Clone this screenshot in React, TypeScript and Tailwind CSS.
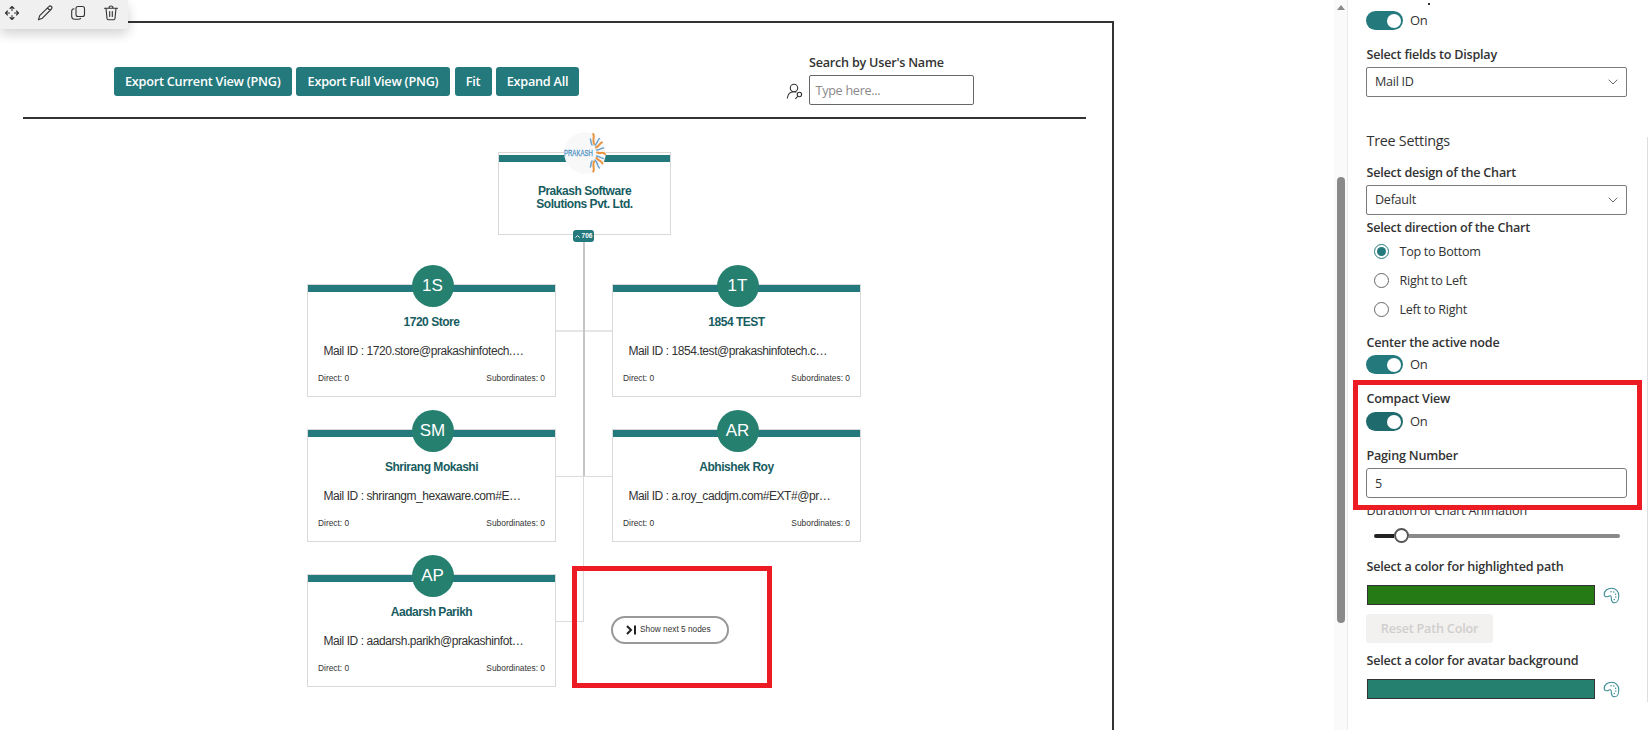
import { clsx } from 'clsx'

type Person = {
  initials: string
  name: string
  mail: string
  place: string
}

const PEOPLE: Person[] = [
  { initials: '1S', name: '1720 Store', mail: '1720.store@prakashinfotech.…', place: 'left-[307px] top-[284px]' },
  { initials: '1T', name: '1854 TEST', mail: '1854.test@prakashinfotech.c…', place: 'left-[612px] top-[284px]' },
  { initials: 'SM', name: 'Shrirang Mokashi', mail: 'shrirangm_hexaware.com#E…', place: 'left-[307px] top-[429px]' },
  { initials: 'AR', name: 'Abhishek Roy', mail: 'a.roy_caddjm.com#EXT#@pr…', place: 'left-[612px] top-[429px]' },
  { initials: 'AP', name: 'Aadarsh Parikh', mail: 'aadarsh.parikh@prakashinfot…', place: 'left-[307px] top-[574px]' },
]

const EXPORT_BUTTONS = [
  { label: 'Export Current View (PNG)', width: 'w-[177.500px]' },
  { label: 'Export Full View (PNG)', width: 'w-[154px]' },
  { label: 'Fit', width: 'w-[37px]' },
  { label: 'Expand All', width: 'w-[83px]' },
]

const DIRECTIONS = ['Top to Bottom', 'Right to Left', 'Left to Right']

function MoveIcon() {
  return (
    <svg width="16" height="16" viewBox="0 0 16 16" fill="none" stroke="#333" strokeWidth="1.1" strokeLinecap="round" strokeLinejoin="round">
      <path d="M8 1.5v4M8 10.5v4M1.5 8h4M10.5 8h4M6 3.5l2-2 2 2M6 12.5l2 2 2-2M3.5 6l-2 2 2 2M12.5 6l2 2-2 2" />
    </svg>
  )
}

function PencilIcon() {
  return (
    <svg width="16" height="16" viewBox="0 0 16 16" fill="none" stroke="#333" strokeWidth="1.1" strokeLinejoin="round">
      <path d="M11.8 1.6a1.7 1.7 0 0 1 2.600 2.400L5.400 13.200l-4 1.600 1.300-4.200zM10.400 3l2.700 2.500" />
    </svg>
  )
}

function CopyIcon() {
  return (
    <svg width="16" height="16" viewBox="0 0 16 16" fill="none" stroke="#333" strokeWidth="1.1" strokeLinecap="round">
      <rect x="6" y="1.5" width="8.5" height="10" rx="2" />
      <path d="M4 3.800C2.500 4 1.700 5 1.700 6.200v5.300A3 3 0 0 0 4.700 14.300h3.800c1 0 1.800-.4 2.100-1" />
    </svg>
  )
}

function TrashIcon() {
  return (
    <svg width="16" height="16" viewBox="0 0 16 16" fill="none" stroke="#333" strokeWidth="1.1" strokeLinecap="round">
      <path d="M1.500 3.200h13M6 3a2 2 0 0 1 4 0M3 3.200l1 10.300c.1.800.6 1.200 1.300 1.200h5.400c.7 0 1.200-.4 1.300-1.200l1-10.300M6.700 6.500v5M9.300 6.500v5" />
    </svg>
  )
}

function PeopleSearchIcon() {
  return (
    <svg width="17" height="17" viewBox="0 0 17 17" fill="none" stroke="#333" strokeWidth="1.100">
      <circle cx="8" cy="5" r="3.700" />
      <path d="M1.300 15.500C1.700 11.500 4.300 8.800 8 8.800c1 0 1.700.2 2.400.5M11.800 13.300l-2.500 2.500" />
      <circle cx="13.400" cy="11.500" r="2.200" />
    </svg>
  )
}

function PaletteIcon() {
  return (
    <svg width="17" height="17" viewBox="0 0 17 17" fill="none" stroke="#3d8c96" strokeWidth="1.100">
      <path d="M8.500 1.200C4.500 1.200 1.200 4 1.200 7.200c0 1.700 1.100 2.500 2.300 2.500 1.800 0 2.600-1.300 3.900-.9 1.600.5.600 2.400 1.100 4.300.4 1.700 1.500 2.700 3 2.700 2.700 0 4.300-3.300 4.300-7.100C15.800 4.200 12.700 1.200 8.500 1.200z" />
      <g fill="#3d8c96" stroke="none">
        <circle cx="8" cy="4.700" r=".75" />
        <circle cx="10.800" cy="5" r=".75" />
        <circle cx="12.600" cy="7.300" r=".75" />
        <circle cx="12.800" cy="10" r=".75" />
        <circle cx="11.300" cy="12.500" r=".75" />
      </g>
    </svg>
  )
}

function Chevron() {
  return (
    <svg width="10" height="6" viewBox="0 0 10 6" fill="none" stroke="#666" strokeWidth="1">
      <path d="M.7.700 5 5 9.300.700" />
    </svg>
  )
}

function Logo() {
  return (
    <svg width="42" height="42" viewBox="0 0 42 42">
      <circle cx="21" cy="21" r="20.800" fill="#f8f8f8" />
      <text transform="translate(0 24) scale(.72 1)" fontSize="8.300" textLength="40" lengthAdjust="spacing" fill="#4f93c6" stroke="#4f93c6" strokeWidth=".3" fontFamily="Liberation Sans">
        PRAKASH
      </text>
      <g fill="none" strokeLinecap="round" strokeWidth="2">
        <path stroke="#ea9440" d="M29.300 2c1.500 3-1 5 .7 10M38 10.500c-2 0-2.500 3.500-6 5M41 22c-2.500-2.500-4 0-8-1.500M38.500 31.500c-1-3-3-2-6-5.500M29.300 39.500c1.500-3-1-6 .7-10" />
        <path stroke="#6ba3cf" strokeWidth="1.500" d="M26.300 7c1 1 0 3 1.700 6M35.500 6.500c-2.500 2-1.500 4-4.500 7M39.500 16c-2 0-4 2-7 2M39.500 26.500c-2 0-4-2-7-2.500M35.500 36c-2.500-2-1.500-5-4.500-8M26.300 35c1-1 0-3 1.700-6" />
      </g>
    </svg>
  )
}

function Toggle({ dark }: { dark?: boolean }) {
  return (
    <div className="flex h-[19px] items-center gap-[7px] text-[#333]">
      <div className={clsx('flex h-[19px] w-[37px] items-center justify-end rounded-full pr-[2px]', dark ? 'bg-[#1f6a6c]' : 'bg-[#24797c]')}>
        <div className="size-[14px] rounded-full bg-white" />
      </div>
      <span className="text-[13px]">On</span>
    </div>
  )
}

function Label({ children, light }: { children: string; light?: boolean }) {
  return (
    <div className={clsx('h-[20px] pl-[0.500px] leading-[20px] tracking-[-0.22px] whitespace-nowrap text-[#333]', light ? 'font-normal' : 'font-semibold')}>
      {children}
    </div>
  )
}

function Select({ value }: { value: string }) {
  return (
    <div className="flex h-[30px] w-[261px] items-center justify-between rounded-[2px] border border-[#7a7a7a] pr-[8px] pl-[8px] text-[#333]">
      <span className="pt-px">{value}</span>
      <Chevron />
    </div>
  )
}

function ColorRow({ color }: { color: string }) {
  return (
    <div className="flex h-[20px] items-center gap-[8px] pl-px">
      <div className={clsx('h-[20px] w-[228px] border border-[#333]', color)} />
      <PaletteIcon />
    </div>
  )
}

function NodeCard({ person }: { person: Person }) {
  return (
    <div className={clsx('absolute h-[113px] w-[249px] border border-[#d9d9d9] bg-white', person.place)}>
      <div className="h-[7px] bg-[#24797c]" />
      <div className="absolute -top-[20.500px] left-[103.500px] flex size-[42px] items-center justify-center rounded-full bg-[#268070] text-[17px] text-white">
        {person.initials}
      </div>
      <div className="mt-[22px] text-center text-[12px] leading-[16px] font-bold tracking-[-0.47px] text-[#175c5f]">{person.name}</div>
      <div className="mt-[13px] pl-[15.500px] text-[12px] leading-[16px] tracking-[-0.43px] whitespace-nowrap text-[#333]">Mail ID : {person.mail}</div>
      <div className="mt-[13px] flex justify-between px-[10px] text-[8.400px] leading-[12px] text-[#333]">
        <span>Direct: 0</span>
        <span>Subordinates: 0</span>
      </div>
    </div>
  )
}

function OrgChart() {
  return (
    <div className="font-['Liberation_Sans',sans-serif] tracking-normal">
      {/* connector lines */}
      <div className="absolute top-[330px] left-[556px] h-[2px] w-[56px] bg-[#e6e6e6]" />
      <div className="absolute top-[476px] left-[556px] h-px w-[56px] bg-[#dcdcdc]" />
      <div className="absolute top-[621px] left-[556px] h-px w-[28px] bg-[#dcdcdc]" />
      <div className="absolute top-[235px] left-[583px] h-[241px] w-[2px] bg-[#c6c6c6]" />
      <div className="absolute top-[476px] left-[583px] h-[146px] w-px bg-[#dcdcdc]" />

      {/* root node */}
      <div className="absolute top-[152px] left-[498px] h-[83px] w-[173px] border border-[#d9d9d9] bg-white">
        <div className="mt-[2px] h-[7px] bg-[#24797c]" />
        <div className="absolute -top-[21px] left-[65px]">
          <Logo />
        </div>
        <div className="mt-[23px] text-center text-[12px] leading-[13px] font-bold tracking-[-0.47px] text-[#175c5f]">
          Prakash Software
          <br />
          Solutions Pvt. Ltd.
        </div>
      </div>
      <div className="absolute top-[230px] left-[573px] flex h-[12px] w-[21px] items-center justify-center gap-[2px] rounded-[3px] bg-[#24797c] text-[6.500px] font-bold text-white">
        <svg width="5" height="3" viewBox="0 0 5 3" fill="none" stroke="#fff" strokeWidth=".9">
          <path d="M.3 2.600 2.500.6l2.200 2" />
        </svg>
        706
      </div>

      {PEOPLE.map((person) => (
        <NodeCard key={person.initials} person={person} />
      ))}

      {/* paging button */}
      <div className="absolute top-[566px] left-[572px] h-[122px] w-[200px] border-[5px] border-[#ed1c24]" />
      <button className="absolute top-[616px] left-[611px] flex h-[28px] w-[118px] items-center rounded-full border-2 border-[#999] pl-[13px] text-[8.300px] text-[#333]">
        <svg width="11" height="10" viewBox="0 0 11 10" fill="none" stroke="#222" strokeWidth="2">
          <path d="M1 1l4 4-4 4M9 .5v9" />
        </svg>
        <span className="-mt-px ml-[3px]">Show next 5 nodes</span>
      </button>
    </div>
  )
}

function ChartArea() {
  return (
    <main className="relative h-[730px] w-[1334px] shrink-0 overflow-hidden">
      <div className="mt-[20.500px] h-[710px] w-[1114px] border-t-2 border-r-2 border-[#333]">
        <div className="mr-[26px] ml-[23px] flex h-[96px] items-start border-b-2 border-[#333] pl-[91px]">
          <div className="mt-[44px] flex gap-[4.500px]">
            {EXPORT_BUTTONS.map(({ label, width }) => (
              <button
                key={label}
                className={clsx('h-[29px] shrink-0 rounded-[3px] bg-[#24797c] pt-[2px] text-[12.700px] font-semibold tracking-[-0.24px] whitespace-nowrap text-white', width)}
              >
                {label}
              </button>
            ))}
          </div>
          <div className="mt-[30px] ml-[206.500px] flex items-end">
            <div className="mr-[6px] mb-[5px]">
              <PeopleSearchIcon />
            </div>
            <div>
              <Label>Search by User's Name</Label>
              <div className="mt-[2px] flex h-[30px] w-[165px] items-center rounded-[2px] border border-[#666] px-[6px] pt-[3px] text-[#8a8a8a]">Type here...</div>
            </div>
          </div>
        </div>
      </div>
      <OrgChart />
      <div className="absolute top-0 left-0 flex h-[29px] w-[128px] items-center gap-[17px] rounded-br-[3px] bg-[#f0f0f0] pb-[4px] pl-[4px] shadow-[0_5px_12px_rgba(0,0,0,0.18)]">
        <MoveIcon />
        <PencilIcon />
        <CopyIcon />
        <TrashIcon />
      </div>
    </main>
  )
}

function SettingsPanel() {
  return (
    <aside className="relative h-[730px] w-[301px] shrink-0 overflow-hidden border-l border-[#ebebeb] pl-[18px]">
      <div className="absolute top-[3px] left-[80px] h-[2px] w-[2px] bg-[#333]" />
      <div className="mt-[11px]">
        <Toggle />
      </div>
      <div className="mt-[15px]">
        <Label>Select fields to Display</Label>
      </div>
      <div className="mt-[2px]">
        <Select value="Mail ID" />
      </div>
      <div className="mt-[34px] h-[20px] pl-[0.500px] text-[14.400px] leading-[20px] text-[#333]">Tree Settings</div>
      <div className="mt-[12px]">
        <Label>Select design of the Chart</Label>
      </div>
      <div className="mt-[2px]">
        <Select value="Default" />
      </div>
      <div className="mt-[3px]">
        <Label>Select direction of the Chart</Label>
      </div>
      <div className="mt-[3px] flex flex-col gap-[9px] pl-[7.500px] text-[#333]">
        {DIRECTIONS.map((direction, i) => (
          <div key={direction} className="flex h-[20px] items-center gap-[11px]">
            <div className={clsx('flex size-[15px] items-center justify-center rounded-full border', i === 0 ? 'border-[#24797c]' : 'border-[#666]')}>
              {i === 0 && <div className="size-[9px] rounded-full bg-[#24797c]" />}
            </div>
            <span className="pt-[2px]">{direction}</span>
          </div>
        ))}
      </div>
      <div className="mt-[14px]">
        <Label>Center the active node</Label>
      </div>
      <div className="mt-[2px]">
        <Toggle />
      </div>
      <div className="mt-[15px]">
        <Label>Compact View</Label>
      </div>
      <div className="mt-[3px]">
        <Toggle dark />
      </div>
      <div className="mt-[15px]">
        <Label>Paging Number</Label>
      </div>
      <div className="mt-[2px] flex h-[30px] w-[261px] items-center rounded-[3px] border border-[#7a7a7a] px-[8px] pt-[2px] text-[#333]">5</div>
      <div className="mt-[3px]">
        <Label light>Duration of Chart Animation</Label>
      </div>
      <div className="mt-[7px] ml-[7.500px] flex h-[15px] w-[246px] items-center">
        <div className="h-[4px] w-[20px] rounded-l-full bg-[#222]" />
        <div className="size-[15px] rounded-full border-2 border-[#555] bg-white" />
        <div className="h-[4px] flex-1 rounded-r-full bg-[#8a8a8a]" />
      </div>
      <div className="mt-[14px]">
        <Label>Select a color for highlighted path</Label>
      </div>
      <div className="mt-[8px]">
        <ColorRow color="bg-[#257a15]" />
      </div>
      <button className="mt-[9px] flex h-[29px] w-[127px] items-center justify-center rounded-[3px] bg-[#f2f1f0] pt-px font-semibold tracking-[-0.2px] whitespace-nowrap text-[#d0cecc]">
        Reset Path Color
      </button>
      <div className="mt-[8px]">
        <Label>Select a color for avatar background</Label>
      </div>
      <div className="mt-[8px]">
        <ColorRow color="bg-[#268070]" />
      </div>

      <div className="absolute top-[380px] left-[5px] h-[130px] w-[289px] border-[5px] border-[#ed1c24]" />
      <div className="absolute top-[137px] right-0 h-[565px] w-px bg-[#dedede]" />
    </aside>
  )
}

export default function App() {
  return (
    <div className="flex h-[730px] w-[1648px] overflow-hidden bg-white font-['Open_Sans',sans-serif] text-[12.600px] tracking-[-0.28px]">
      <ChartArea />
      {/* scrollbar */}
      <div className="flex h-[730px] w-[13px] shrink-0 flex-col items-center bg-[#fafafa]">
        <svg className="mt-[5px]" width="8" height="5" viewBox="0 0 8 5" fill="#8a8a8a">
          <path d="M4 0l4 5H0z" />
        </svg>
        <div className="mt-[167px] h-[446px] w-[8px] rounded-full bg-[#8a8a8a]" />
      </div>
      <SettingsPanel />
    </div>
  )
}
